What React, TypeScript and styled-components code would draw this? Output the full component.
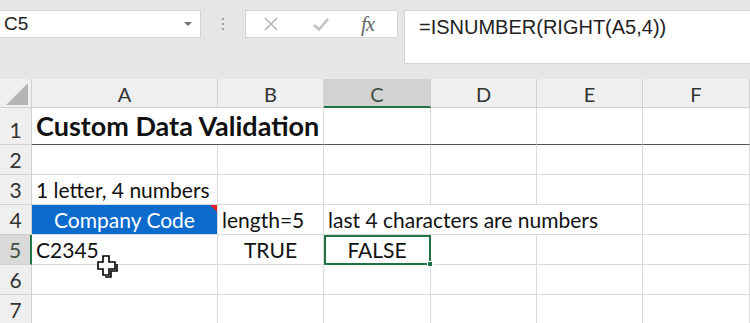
import styled, { createGlobalStyle } from "styled-components"

const GlobalStyle = createGlobalStyle`
    html, body {
        margin: 0;
        padding: 0;
        background: #e6e6e6;
        overflow: hidden;
    }
`

const Page = styled.div`
    width: 750px;
    height: 323px;
    background: #e6e6e6;
    display: flex;
    flex-direction: column;
    overflow: hidden;
    position: relative;
`

const FormulaBar = styled.div`
    display: flex;
    align-items: flex-start;
    padding-top: 10px;
    height: 79px;
    flex-shrink: 0;
    box-sizing: border-box;
`

const NameBox = styled.div`
    width: 201px;
    height: 28px;
    box-sizing: border-box;
    background: #fff;
    border: 1px solid #d4d4d4;
    border-left: none;
    display: flex;
    align-items: center;
    justify-content: space-between;
    padding: 0 8px 0 4px;
    font-family: "Liberation Sans", Arial, sans-serif;
    font-size: 19px;
    color: #222;
`

const DropArrow = styled.span`
    width: 0;
    height: 0;
    border-left: 4px solid transparent;
    border-right: 4px solid transparent;
    border-top: 4px solid #707070;
`

const Grip = styled.div`
    width: 44px;
    flex-shrink: 0;
    height: 28px;
    display: flex;
    flex-direction: column;
    align-items: center;
    justify-content: center;
    gap: 3px;

    span {
        width: 2px;
        height: 2px;
        background: #a0a0a0;
    }
`

const ActionBox = styled.div`
    width: 153px;
    flex-shrink: 0;
    height: 28px;
    box-sizing: border-box;
    background: #fff;
    border: 1px solid #d4d4d4;
    display: flex;
    align-items: center;
    gap: 33px;
    padding: 0 0 0 17px;
`

const Fx = styled.span`
    font-family: "Liberation Serif", "Times New Roman", serif;
    font-style: italic;
    font-size: 21px;
    color: #666;
    letter-spacing: -1px;
    margin-left: -2px;
`

const FormulaInput = styled.div`
    margin-left: 6px;
    flex: 1;
    height: 54px;
    box-sizing: border-box;
    background: #fff;
    border: 1px solid #d4d4d4;
    border-right: none;
    padding: 5px 0 0 14px;
    font-family: "Liberation Sans", Arial, sans-serif;
    font-size: 20px;
    color: #222;
`

const Sheet = styled.div`
    position: relative;
    display: grid;
    grid-template-columns: 32px 186px 106px 107px 106px 106px 107px;
    grid-template-rows: 29px 37px repeat(6, 30px);
    background: #fff;
    font-family: Lato, "Noto Sans", sans-serif;
`

const Corner = styled.div`
    background: #efefef;
    border-right: 1px solid #d0d0d0;
    border-bottom: 1px solid #d0d0d0;
    box-sizing: border-box;
    display: flex;
    align-items: flex-end;
    justify-content: flex-end;
    padding: 0 3px 2px 0;
`

interface HeadProps {
    $active?: boolean
}

const ColHead = styled.div<HeadProps>`
    background: ${(p) => (p.$active ? "#d2d2d2" : "#efefef")};
    border-right: 1px solid #d0d0d0;
    border-bottom: ${(p) => (p.$active ? "2px solid #217346" : "1px solid #d0d0d0")};
    box-sizing: border-box;
    display: flex;
    align-items: center;
    justify-content: center;
    font-size: 20px;
    color: ${(p) => (p.$active ? "#3f4f45" : "#333")};
    padding-top: 2px;
`

const RowHead = styled.div<HeadProps>`
    background: ${(p) => (p.$active ? "#d9d9d9" : "#efefef")};
    border-right: ${(p) => (p.$active ? "2px solid #217346" : "1px solid #d0d0d0")};
    border-bottom: 1px solid #d0d0d0;
    box-sizing: border-box;
    display: flex;
    align-items: flex-end;
    justify-content: center;
    padding-bottom: 2px;
    font-size: 21px;
    color: ${(p) => (p.$active ? "#3f4f45" : "#333")};
`

interface CellProps {
    $span?: number
    $align?: "left" | "center"
    $bold?: boolean
    $fill?: string
    $ruled?: boolean
    $selected?: boolean
}

const Cell = styled.div<CellProps>`
    position: relative;
    grid-column: span ${(p) => p.$span || 1};
    box-sizing: border-box;
    border-right: 1px solid #dadada;
    border-bottom: 1px solid ${(p) => (p.$ruled ? "#555" : "#dadada")};
    background: ${(p) => p.$fill || "#fff"};
    color: ${(p) => (p.$fill ? "#fff" : "#111")};
    display: flex;
    align-items: flex-end;
    justify-content: ${(p) => (p.$align === "center" ? "center" : "flex-start")};
    padding: 0 4px 2px;
    font-size: ${(p) => (p.$bold ? "27px" : "21px")};
    font-weight: ${(p) => (p.$bold ? 700 : 400)};
    white-space: nowrap;
    ${(p) => p.$selected && "outline: 2px solid #217346; outline-offset: -2px; z-index: 1;"}
`

const Handle = styled.span`
    position: absolute;
    right: -3px;
    bottom: -3px;
    width: 6px;
    height: 6px;
    background: #217346;
    border: 1px solid #fff;
    box-sizing: border-box;
`

const Flag = styled.span`
    position: absolute;
    top: 0;
    right: 0;
    width: 0;
    height: 0;
    border-top: 7px solid #e8202a;
    border-left: 7px solid transparent;
`

const Cursor = styled.svg`
    position: absolute;
    left: 96px;
    top: 175px;
    z-index: 2;
`

const cols = ["A", "B", "C", "D", "E", "F"]

const EmptyRow = ({ n }: { n: number }) => (
    <>
        <RowHead>{n}</RowHead>
        {cols.map((c) => (
            <Cell key={c} />
        ))}
    </>
)

const App = () => {
    return (
        <Page>
            <GlobalStyle />
            <FormulaBar>
                <NameBox>
                    C5
                    <DropArrow />
                </NameBox>
                <Grip>
                    <span />
                    <span />
                    <span />
                </Grip>
                <ActionBox>
                    <svg width="16" height="16" viewBox="0 0 16 16">
                        <path d="M2 2 L14 14 M14 2 L2 14" stroke="#b4b4b4" strokeWidth="1.6" fill="none" />
                    </svg>
                    <svg width="18" height="16" viewBox="0 0 18 16">
                        <path d="M2 9 L7 13.5 L16 3" stroke="#c0c0c0" strokeWidth="2.4" fill="none" />
                    </svg>
                    <Fx>fx</Fx>
                </ActionBox>
                <FormulaInput>=ISNUMBER(RIGHT(A5,4))</FormulaInput>
            </FormulaBar>

            <Sheet>
                <Corner>
                    <svg width="22" height="22" viewBox="0 0 22 22">
                        <polygon points="22,0 22,22 0,22" fill="#b5b5b5" />
                    </svg>
                </Corner>
                {cols.map((c) => (
                    <ColHead key={c} $active={c === "C"}>
                        {c}
                    </ColHead>
                ))}

                <RowHead>1</RowHead>
                <Cell $span={2} $bold $ruled>
                    Custom Data Validation
                </Cell>
                <Cell $ruled />
                <Cell $ruled />
                <Cell $ruled />
                <Cell $ruled />

                <EmptyRow n={2} />

                <RowHead>3</RowHead>
                <Cell>1 letter, 4 numbers</Cell>
                <Cell />
                <Cell />
                <Cell />
                <Cell />
                <Cell />

                <RowHead>4</RowHead>
                <Cell $align="center" $fill="#0b6bcc">
                    Company Code
                    <Flag />
                </Cell>
                <Cell>length=5</Cell>
                <Cell $span={3}>last 4 characters are numbers</Cell>
                <Cell />

                <RowHead $active>5</RowHead>
                <Cell>C2345</Cell>
                <Cell $align="center">TRUE</Cell>
                <Cell $align="center" $selected>
                    FALSE
                    <Handle />
                </Cell>
                <Cell />
                <Cell />
                <Cell />

                <EmptyRow n={6} />
                <EmptyRow n={7} />

                <Cursor width="22" height="24" viewBox="0 0 22 24">
                    <path
                        d="M7 2 H13 V8 H19 V15 H13 V21 H7 V15 H2 V8 H7 Z"
                        fill="#fff"
                        stroke="#000"
                        strokeWidth="1.6"
                    />
                    <path d="M20 9 V16 H14 V22 H8" stroke="#000" strokeWidth="1.6" fill="none" transform="translate(1 1)" />
                </Cursor>
            </Sheet>
        </Page>
    )
}

export default App
